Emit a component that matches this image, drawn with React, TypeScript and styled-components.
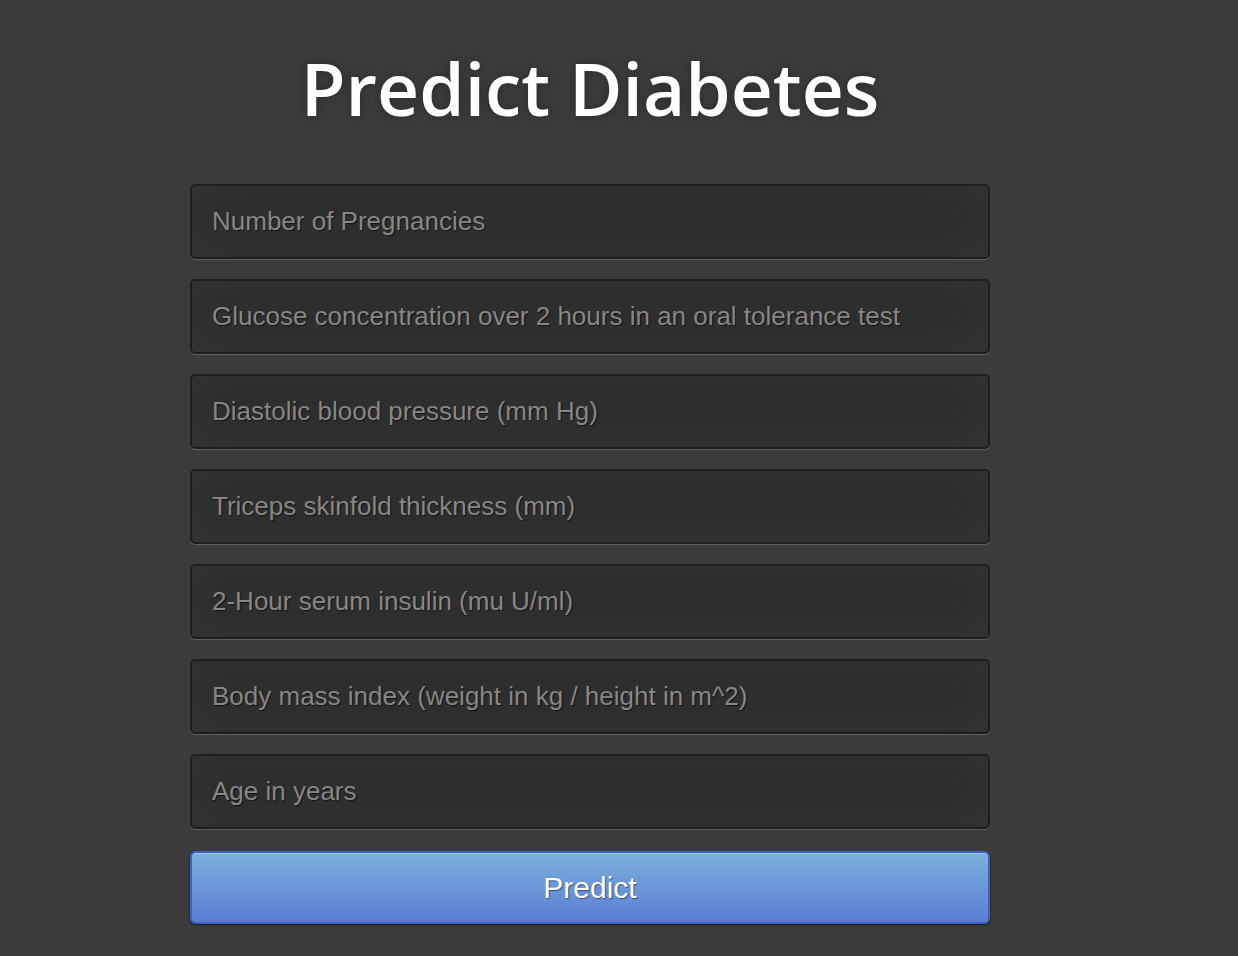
import React from "react";
import styled, { createGlobalStyle } from "styled-components";

const Global = createGlobalStyle`
  html, body { margin: 0; padding: 0; }
  body {
    background: #3b3b3b;
    min-height: 956px;
    font-family: "Liberation Sans", Arial, sans-serif;
  }
`;

const Page = styled.div`
  width: 800px;
  margin: 0 0 0 190px;
  display: flex;
  flex-direction: column;
  padding-top: 40px;
`;

const Title = styled.h1`
  margin: 0 0 48px 0;
  text-align: center;
  font-family: "Open Sans", sans-serif;
  font-weight: 600;
  font-size: 73px;
  line-height: 96px;
  color: #fff;
  letter-spacing: 0;
  text-shadow: 0 0 10px rgba(0, 0, 0, 0.3);
`;

const Form = styled.form`
  display: flex;
  flex-direction: column;
  gap: 20px;
`;

const Field = styled.input`
  box-sizing: border-box;
  width: 100%;
  height: 75px;
  padding: 0 20px;
  border-radius: 5px;
  border: 2px solid #1e1e1e;
  background: #2e2e2e;
  box-shadow: inset 0 -5px 45px rgba(100, 100, 100, 0.12), 0 1px 1px rgba(255, 255, 255, 0.2);
  font-family: "Liberation Sans", Arial, sans-serif;
  font-size: 26px;
  color: #ddd;
  outline: none;
  &::placeholder {
    color: #878787;
    text-shadow: 1px 1px 1px rgba(0, 0, 0, 0.6);
  }
`;

const Button = styled.button`
  box-sizing: border-box;
  width: 100%;
  height: 73px;
  margin-top: 2px;
  border-radius: 6px;
  border: 2px solid #3d63c0;
  background: linear-gradient(to bottom, #7cb0dd, #5b7dd3);
  box-shadow: inset 0 1px 0 rgba(255, 255, 255, 0.25), 0 1px 2px rgba(0, 0, 0, 0.6);
  font-family: "Liberation Sans", Arial, sans-serif;
  font-size: 30px;
  color: #fff;
  text-shadow: 1px 1px 1px rgba(0, 0, 0, 0.45);
  cursor: pointer;
`;

const fields = [
  "Number of Pregnancies",
  "Glucose concentration over 2 hours in an oral tolerance test",
  "Diastolic blood pressure (mm Hg)",
  "Triceps skinfold thickness (mm)",
  "2-Hour serum insulin (mu U/ml)",
  "Body mass index (weight in kg / height in m^2)",
  "Age in years",
];

export default function App() {
  return (
    <>
      <Global />
      <Page>
        <Title>Predict Diabetes</Title>
        <Form onSubmit={(e) => e.preventDefault()}>
          {fields.map((f) => (
            <Field key={f} type="text" placeholder={f} />
          ))}
          <Button type="submit">Predict</Button>
        </Form>
      </Page>
    </>
  );
}
